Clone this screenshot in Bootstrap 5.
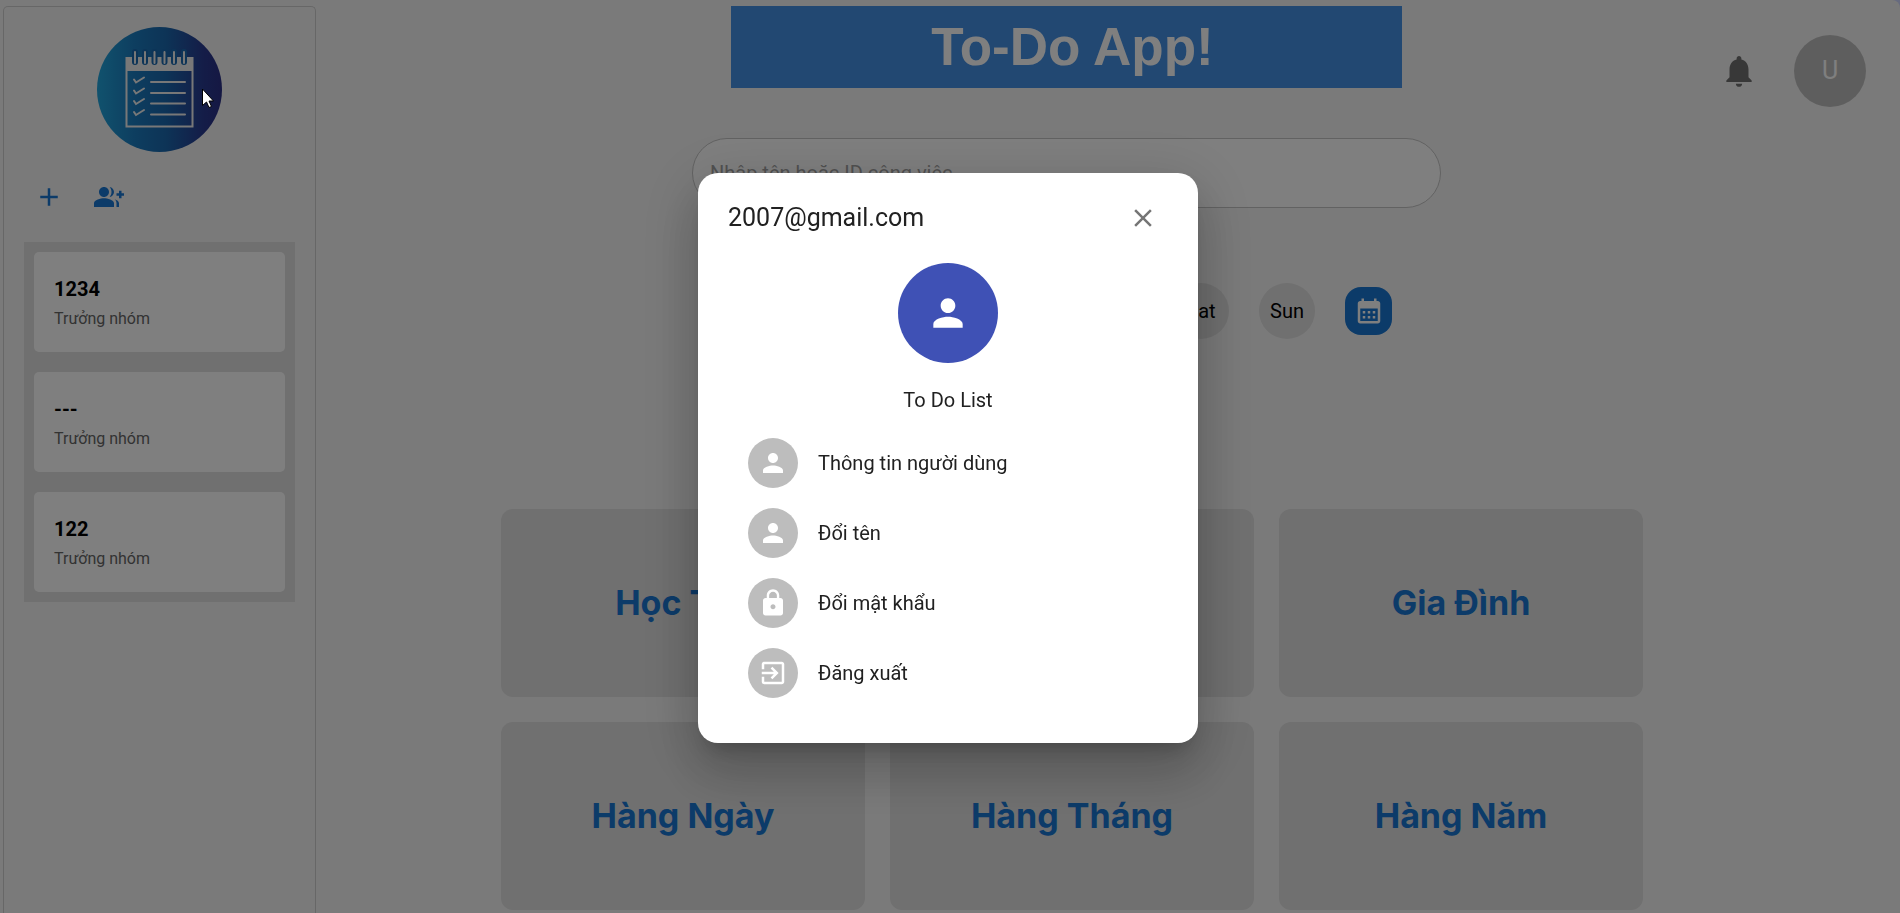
<!DOCTYPE html>
<html lang="vi">
<head>
<meta charset="utf-8">
<meta name="viewport" content="width=device-width, initial-scale=1">
<title>To-Do App</title>
<link href="https://cdn.jsdelivr.net/npm/bootstrap@5.3.0/dist/css/bootstrap.min.css" rel="stylesheet">
<style>
  :root { --brand: #1976d2; --panel: #e0e0e0; --page: #f5f5f5; }
  body { font-family: Roboto, "Noto Sans", sans-serif; font-size: 20px; line-height: 30px; background: #cfd6ff; color: #000; overflow: hidden; }
  svg { display: block; fill: currentColor; }
  .i30 { width: 30px; height: 30px; }
  .i38 { width: 38px; height: 38px; }
  .i44 { width: 44px; height: 44px; }
  .app-shell { min-height: 100vh; background: var(--page); border-top-right-radius: 8px; }
  .side-panel { width: 313px; margin: 6px 0 0 3px; padding: 20px; border: 1px solid #cfcfcf; border-bottom: 0; border-radius: 5px 5px 0 0; }
  .logo { width: 125px; height: 125px; }
  .icon-btn { width: 50px; height: 50px; padding: 10px; border: 0; background: none; color: var(--brand); border-radius: 50%; }
  .group-list { background: var(--panel); padding: 10px; gap: 20px; margin-top: 20px; }
  .group-item { height: 100px; padding: 20px; border: 0; border-radius: 5px; background: #fff; color: #000; text-align: left; }
  .group-item strong { line-height: 34px; }
  .group-item span { font-size: 16px; line-height: 26px; color: #666; }
  .main-area { padding-left: 117px; }
  .banner { width: 100%; max-width: 671px; height: 82px; margin-top: 6px; padding-left: 12px; background: #4490e4; color: #fff; font: 700 53px/82px "Liberation Sans", Arial, sans-serif; }
  .search-box { width: 100%; max-width: 749px; height: 70px; margin-top: 50px; border: 1px solid #c4c4c4; border-radius: 35px; padding: 0 17px; font-size: 20px; }
  .search-box::placeholder { color: #a2a2a2; }
  .days { gap: 30px; margin-top: 75px; padding-left: 2px; }
  .day { width: 56px; height: 56px; padding: 0; border: 0; border-radius: 50%; background: var(--panel); color: #000; }
  .cal-btn { width: 47px; height: 48px; padding: 0; border: 0; border-radius: 16px; background: var(--brand); color: #fff; }
  .tile-grid { display: grid; grid-template-columns: repeat(3, 1fr); gap: 25px; width: 100%; margin-top: 170px; padding: 0 57px 2px 68px; }
  .tile { height: 188px; border: 0; border-radius: 12px; background: var(--panel); color: var(--brand); font: 700 34px/40px Inter, "Noto Sans", sans-serif; }
  .tools { width: 200px; padding: 35px 34px 0 0; gap: 26px; }
  .bell-btn { width: 58px; height: 72px; padding: 0; border: 0; background: none; color: #717171; }
  .user-btn { width: 72px; height: 72px; padding: 0; border: 0; border-radius: 50%; background: #bdbdbd; color: #fff; font-size: 25px; }
  .modal-backdrop { --bs-backdrop-bg: #000; --bs-backdrop-opacity: .5; }
  #accountDialog { padding: 2px 4px 0 0; }
  #accountDialog .modal-dialog { max-width: 500px; margin-top: 0; margin-bottom: 0; min-height: 100%; }
  #accountDialog .modal-content { border: 0; border-radius: 20px; padding: 20px 30px 35px; color: #212121; box-shadow: 0 14px 19px -9px rgba(0,0,0,.2), 0 30px 48px 4px rgba(0,0,0,.14), 0 11px 58px 10px rgba(0,0,0,.12); }
  .dialog-title { font-size: 25px; font-weight: 400; }
  .dialog-close { color: #757575; }
  .account-photo { width: 100px; height: 100px; background: #3f51b5; color: #fff; margin-top: 20px; }
  .account-name { margin: 22px 0 13px; }
  .account-menu { padding: 0 20px; }
  .menu-row { height: 70px; padding: 0; gap: 20px; border: 0; background: none; color: #212121; }
  .menu-icon { width: 50px; height: 50px; background: #bdbdbd; color: #fff; }
  .pointer { position: fixed; left: 202px; top: 88px; width: 12px; height: 20px; z-index: 2000; pointer-events: none; }
</style>
</head>
<body>
<svg class="d-none" aria-hidden="true">
  <symbol id="person" viewBox="0 0 24 24"><path d="M12 12c2.21 0 4-1.79 4-4s-1.79-4-4-4-4 1.79-4 4 1.79 4 4 4zm0 2c-2.67 0-8 1.34-8 4v2h16v-2c0-2.66-5.33-4-8-4z"/></symbol>
</svg>

<div class="app-shell d-flex">
  <aside class="side-panel flex-shrink-0 d-flex flex-column">
    <svg class="logo align-self-center" viewBox="0 0 125 125" role="img" aria-label="To-Do">
      <defs><linearGradient id="lg"><stop offset="0" stop-color="#22a5dc"/><stop offset=".3" stop-color="#1b7cc0"/><stop offset=".55" stop-color="#1a68ae"/><stop offset=".85" stop-color="#293a90"/><stop offset="1" stop-color="#2a2f86"/></linearGradient></defs>
      <circle cx="62.500" cy="62.500" r="62.500" fill="url(#lg)"/>
      <g fill="none" stroke="#f1f1f1">
        <rect x="29.500" y="31" width="66" height="68.500" stroke-width="2"/>
        <path d="M29 30h67v14H29z" fill="#f1f1f1" stroke="none"/>
        <path d="M38 25v10M48 25v10M57.500 25v10M67.500 25v10M77 25v10M87 25v10" stroke="#1a68ae" stroke-width="6" stroke-linecap="round"/>
        <path d="M38 25v11M48 25v11M57.500 25v11M67.500 25v11M77 25v11M87 25v11" stroke-width="2" stroke-linecap="round"/>
        <path d="M54 55h34M54 66h34M54 76.500h34M54 87.500h34" stroke-width="2" stroke-linecap="round"/>
        <path d="M37 52.500l2 3 8-5M37 63.500l2 3 8-5M37 74l2 3 8-5M37 85l2 3 8-5" stroke-width="2" stroke-linecap="round"/>
      </g>
    </svg>
    <div class="d-flex mt-3 pt-1" style="gap:10px">
      <button type="button" class="icon-btn" aria-label="Thêm"><svg class="i30" viewBox="0 0 24 24"><path d="M19 13h-6v6h-2v-6H5v-2h6V5h2v6h6v2z"/></svg></button>
      <button type="button" class="icon-btn" aria-label="Thêm nhóm"><svg class="i30" viewBox="0 0 24 24"><path d="M22 9V7h-2v2h-2v2h2v2h2v-2h2V9zM8 12c2.21 0 4-1.79 4-4s-1.79-4-4-4-4 1.79-4 4 1.79 4 4 4zm0 1c-2.67 0-8 1.34-8 4v3h16v-3c0-2.66-5.33-4-8-4zm4.510-8.950C13.430 5.110 14 6.490 14 8s-.57 2.890-1.490 3.950C14.470 11.700 16 10.040 16 8s-1.530-3.700-3.490-3.950zm4.020 9.780C17.420 14.660 18 15.700 18 17v3h2v-3c0-1.450-1.590-2.510-3.470-3.170z"/></svg></button>
    </div>
    <div class="group-list d-flex flex-column">
      <button type="button" class="group-item d-flex flex-column"><strong>1234</strong><span>Trưởng nhóm</span></button>
      <button type="button" class="group-item d-flex flex-column"><strong>---</strong><span>Trưởng nhóm</span></button>
      <button type="button" class="group-item d-flex flex-column"><strong>122</strong><span>Trưởng nhóm</span></button>
    </div>
  </aside>

  <main class="main-area d-flex flex-grow-1">
    <div class="flex-grow-1 d-flex flex-column align-items-center">
      <h1 class="banner text-center mb-0">To-Do App!</h1>
      <input class="search-box" type="search" aria-label="Tìm công việc" placeholder="Nhập tên hoặc ID công việc...">
      <div class="days d-flex align-items-center">
        <button type="button" class="day">Mon</button>
        <button type="button" class="day">Tue</button>
        <button type="button" class="day">Wed</button>
        <button type="button" class="day">Thu</button>
        <button type="button" class="day">Fri</button>
        <button type="button" class="day">Sat</button>
        <button type="button" class="day">Sun</button>
        <button type="button" class="cal-btn d-flex align-items-center justify-content-center" aria-label="Lịch"><svg class="i30" viewBox="0 0 24 24"><path d="M19 4h-1V2h-2v2H8V2H6v2H5c-1.110 0-1.990.9-1.990 2L3 20c0 1.100.89 2 2 2h14c1.100 0 2-.9 2-2V6c0-1.100-.9-2-2-2zm0 16H5V10h14v10zM9 14H7v-2h2v2zm4 0h-2v-2h2v2zm4 0h-2v-2h2v2zm-8 4H7v-2h2v2zm4 0h-2v-2h2v2zm4 0h-2v-2h2v2z"/></svg></button>
      </div>
      <div class="tile-grid">
        <button type="button" class="tile">Học Tập</button>
        <button type="button" class="tile">Công Việc</button>
        <button type="button" class="tile">Gia Đình</button>
        <button type="button" class="tile">Hàng Ngày</button>
        <button type="button" class="tile">Hàng Tháng</button>
        <button type="button" class="tile">Hàng Năm</button>
      </div>
    </div>
    <div class="tools flex-shrink-0 d-flex justify-content-end align-items-start">
      <button type="button" class="bell-btn d-flex align-items-center justify-content-center" aria-label="Thông báo"><svg class="i38" viewBox="0 0 24 24"><path d="M12 22c1.100 0 2-.9 2-2h-4c0 1.100.89 2 2 2zm6-6v-5c0-3.070-1.640-5.640-4.500-6.320V4c0-.83-.67-1.500-1.500-1.500s-1.500.67-1.500 1.500v.68C7.630 5.360 6 7.920 6 11v5l-2 2v1h16v-1l-2-2z"/></svg></button>
      <button type="button" class="user-btn">U</button>
    </div>
  </main>
</div>

<div class="modal-backdrop show"></div>
<div class="modal show d-block" id="accountDialog" tabindex="-1" role="dialog" aria-modal="true" aria-labelledby="accountTitle">
  <div class="modal-dialog modal-dialog-centered">
    <div class="modal-content">
      <div class="d-flex align-items-center justify-content-between">
        <h2 class="dialog-title mb-0" id="accountTitle">2007@gmail.com</h2>
        <button type="button" class="icon-btn dialog-close" aria-label="Đóng"><svg class="i30" viewBox="0 0 24 24"><path d="M19 6.410L17.590 5 12 10.590 6.410 5 5 6.410 10.590 12 5 17.590 6.410 19 12 13.410 17.590 19 19 17.590 13.410 12z"/></svg></button>
      </div>
      <div class="account-photo rounded-circle mx-auto d-flex align-items-center justify-content-center"><svg class="i44"><use href="#person"/></svg></div>
      <p class="account-name text-center">To Do List</p>
      <div class="account-menu d-flex flex-column">
        <button type="button" class="menu-row d-flex align-items-center"><span class="menu-icon rounded-circle d-flex align-items-center justify-content-center"><svg class="i30"><use href="#person"/></svg></span>Thông tin người dùng</button>
        <button type="button" class="menu-row d-flex align-items-center"><span class="menu-icon rounded-circle d-flex align-items-center justify-content-center"><svg class="i30"><use href="#person"/></svg></span>Đổi tên</button>
        <button type="button" class="menu-row d-flex align-items-center"><span class="menu-icon rounded-circle d-flex align-items-center justify-content-center"><svg class="i30" viewBox="0 0 24 24"><path d="M18 8h-1V6c0-2.760-2.240-5-5-5S7 3.240 7 6v2H6c-1.100 0-2 .9-2 2v10c0 1.100.9 2 2 2h12c1.100 0 2-.9 2-2V10c0-1.100-.9-2-2-2zm-6 9c-1.100 0-2-.9-2-2s.9-2 2-2 2 .9 2 2-.9 2-2 2zm3.100-9H8.900V6c0-1.710 1.390-3.100 3.100-3.100s3.100 1.390 3.100 3.100v2z"/></svg></span>Đổi mật khẩu</button>
        <button type="button" class="menu-row d-flex align-items-center"><span class="menu-icon rounded-circle d-flex align-items-center justify-content-center"><svg class="i30" viewBox="0 0 24 24"><path d="M10.090 15.590L11.500 17l5-5-5-5-1.410 1.410L12.670 11H3v2h9.670l-2.580 2.590zM19 3H5c-1.110 0-2 .9-2 2v4h2V5h14v14H5v-4H3v4c0 1.100.89 2 2 2h14c1.100 0 2-.9 2-2V5c0-1.100-.9-2-2-2z"/></svg></span>Đăng xuất</button>
      </div>
    </div>
  </div>
</div>
<svg class="pointer" viewBox="0 0 12 20" aria-hidden="true"><path d="M.5 1v16.500l4-3.500 2.500 5.500 2.500-1-2.500-5.500h4.500z" fill="#fff" stroke="#000"/></svg>
<script src="https://cdn.jsdelivr.net/npm/bootstrap@5.3.0/dist/js/bootstrap.bundle.min.js"></script>
</body>
</html>
